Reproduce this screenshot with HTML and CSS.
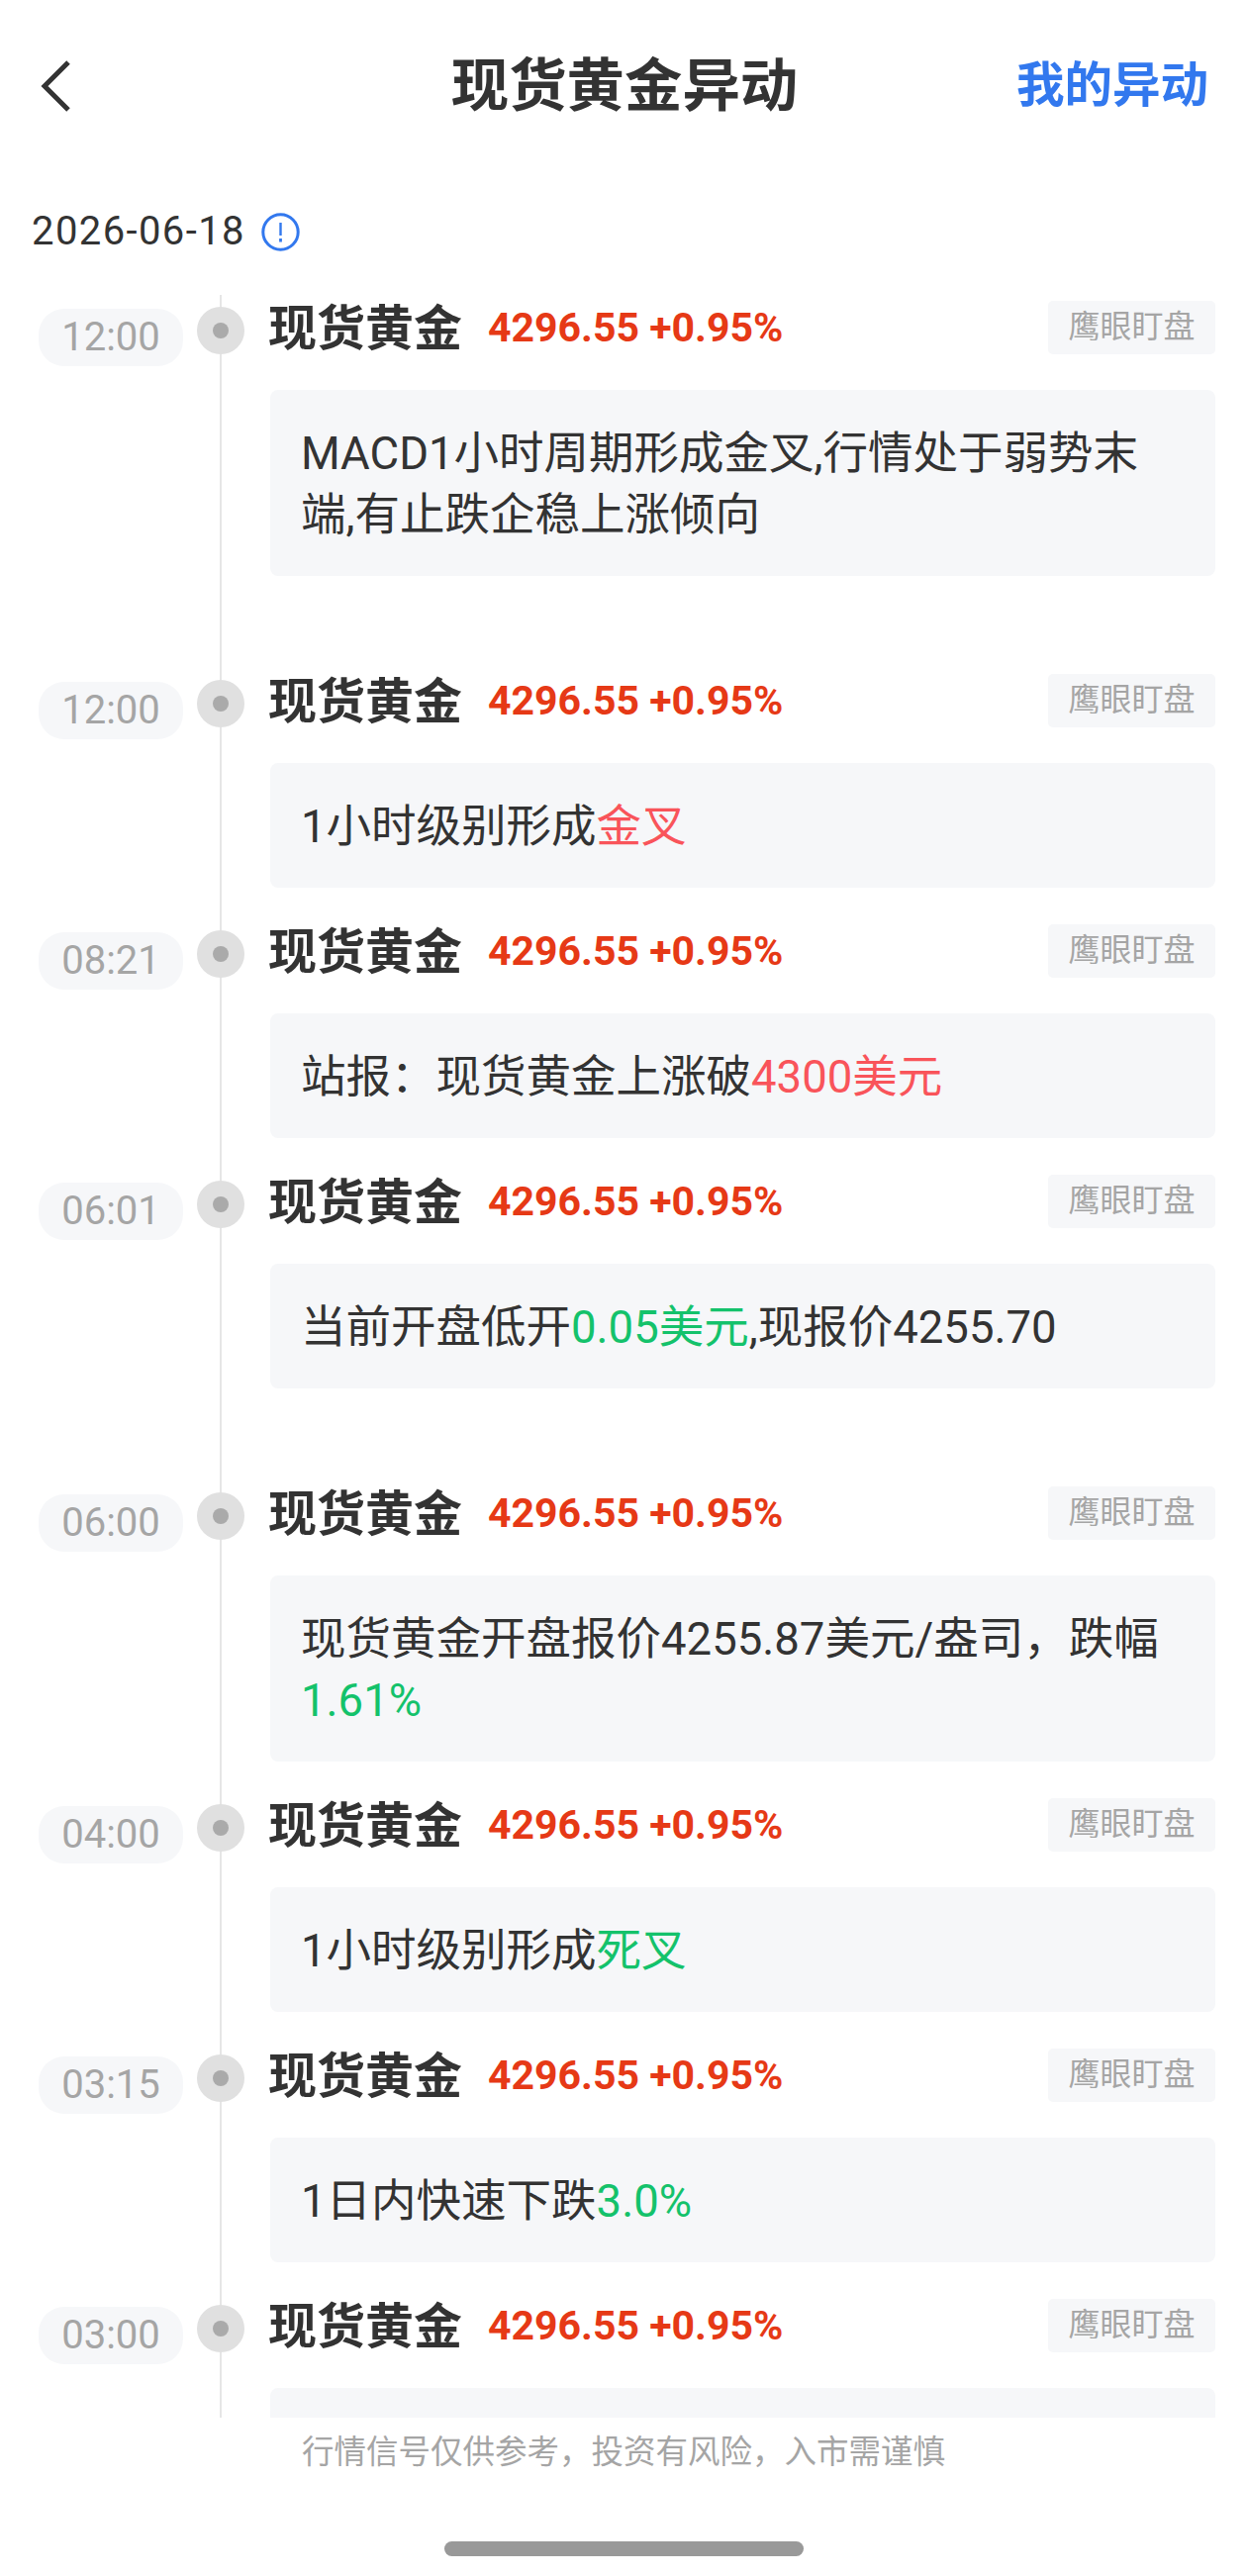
FILE: index.html
```html
<!DOCTYPE html>
<html lang="zh-CN">
<head>
<meta charset="utf-8">
<title>现货黄金异动</title>
<link rel="stylesheet" href="styles.css">
</head>
<body>
<div class="page">
  <header class="nav">
    <svg class="back" width="30" height="52" viewBox="0 0 30 52"><path d="M28 2 L4 26 L28 50" fill="none" stroke="#333" stroke-width="5"/></svg>
    <h1 class="title">现货黄金异动</h1>
    <a class="mine">我的异动</a>
  </header>
  <div class="date-row">
    <span class="date">2026-06-18</span>
    <svg class="info" width="39" height="39" viewBox="0 0 39 39"><circle cx="19.5" cy="19.5" r="17.7" fill="none" stroke="#3278ee" stroke-width="3"/><path d="M19.5 10 V23" stroke="#3278ee" stroke-width="2.4"/><path d="M19.5 26 V29.5" stroke="#3278ee" stroke-width="2.8"/></svg>
  </div>
  <main class="timeline">
    <section class="row extra">
      <div class="time"><span>12:00</span></div>
      <div class="rail"><i class="dot"></i></div>
      <div class="main">
        <div class="head"><b class="name">现货黄金</b><span class="price">4296.55 +0.95%</span><span class="tag">鹰眼盯盘</span></div>
        <p class="body">MACD1小时周期形成金叉,行情处于弱势末端,有止跌企稳上涨倾向</p>
      </div>
    </section>
    <section class="row">
      <div class="time"><span>12:00</span></div>
      <div class="rail"><i class="dot"></i></div>
      <div class="main">
        <div class="head"><b class="name">现货黄金</b><span class="price">4296.55 +0.95%</span><span class="tag">鹰眼盯盘</span></div>
        <p class="body">1小时级别形成<span class="up">金叉</span></p>
      </div>
    </section>
    <section class="row">
      <div class="time"><span>08:21</span></div>
      <div class="rail"><i class="dot"></i></div>
      <div class="main">
        <div class="head"><b class="name">现货黄金</b><span class="price">4296.55 +0.95%</span><span class="tag">鹰眼盯盘</span></div>
        <p class="body">站报：现货黄金上涨破<span class="up">4300美元</span></p>
      </div>
    </section>
    <section class="row extra">
      <div class="time"><span>06:01</span></div>
      <div class="rail"><i class="dot"></i></div>
      <div class="main">
        <div class="head"><b class="name">现货黄金</b><span class="price">4296.55 +0.95%</span><span class="tag">鹰眼盯盘</span></div>
        <p class="body">当前开盘低开<span class="down">0.05美元</span>,现报价4255.70</p>
      </div>
    </section>
    <section class="row">
      <div class="time"><span>06:00</span></div>
      <div class="rail"><i class="dot"></i></div>
      <div class="main">
        <div class="head"><b class="name">现货黄金</b><span class="price">4296.55 +0.95%</span><span class="tag">鹰眼盯盘</span></div>
        <p class="body">现货黄金开盘报价4255.87美元/盎司，跌幅<span class="down">1.61%</span></p>
      </div>
    </section>
    <section class="row">
      <div class="time"><span>04:00</span></div>
      <div class="rail"><i class="dot"></i></div>
      <div class="main">
        <div class="head"><b class="name">现货黄金</b><span class="price">4296.55 +0.95%</span><span class="tag">鹰眼盯盘</span></div>
        <p class="body">1小时级别形成<span class="down">死叉</span></p>
      </div>
    </section>
    <section class="row">
      <div class="time"><span>03:15</span></div>
      <div class="rail"><i class="dot"></i></div>
      <div class="main">
        <div class="head"><b class="name">现货黄金</b><span class="price">4296.55 +0.95%</span><span class="tag">鹰眼盯盘</span></div>
        <p class="body">1日内快速下跌<span class="down">3.0%</span></p>
      </div>
    </section>
    <section class="row">
      <div class="time"><span>03:00</span></div>
      <div class="rail"><i class="dot"></i></div>
      <div class="main">
        <div class="head"><b class="name">现货黄金</b><span class="price">4296.55 +0.95%</span><span class="tag">鹰眼盯盘</span></div>
        <p class="body">&nbsp;</p>
      </div>
    </section>
  </main>
  <footer class="foot">
    <p class="note">行情信号仅供参考，投资有风险，入市需谨慎</p>
    <div class="home"></div>
  </footer>
</div>
</body>
</html>
```
FILE: styles.css
```css
* { box-sizing: border-box; }
html, body { margin: 0; padding: 0; background: #fff; }
body { font-family: Roboto, "Noto Sans CJK SC", sans-serif; color: #333; }
.page { width: 1260px; height: 2603px; overflow: hidden; display: flex; flex-direction: column; }

.nav { height: 174px; flex: none; display: grid; grid-template-columns: 1fr auto 1fr; align-items: center; padding: 0 39px 0 41px; }
.back { display: block; }
.title { margin: 0; font-size: 58.4px; font-weight: 700; line-height: 80px; }
.mine { justify-self: end; font-size: 48.5px; font-weight: 700; line-height: 64px; color: #3278ee; }

.date-row { height: 124px; flex: none; display: flex; align-items: flex-start; gap: 16px; padding: 41px 0 0 32px; }
.date { font-size: 40px; line-height: 38px; letter-spacing: 1.4px; color: #333; }

.timeline { height: 2145px; flex: none; overflow: hidden; padding: 0 32px 0 39px; }
.row { display: grid; grid-template-columns: 146px 48px 1fr; column-gap: 14px; }
.row.extra { padding-bottom: 62px; }

.time { padding-top: 14px; }
.time span { display: block; height: 58px; border-radius: 26px; background: #f6f7f9; color: #a5a5a5; font-size: 40px; line-height: 58px; text-align: center; }

.rail { background: linear-gradient(#e6e6e6, #e6e6e6) center / 2px 100% no-repeat; }
.row.extra .rail { margin-bottom: -62px; }
.dot { display: flex; margin-top: 12px; width: 48px; height: 48px; border-radius: 50%; background: #e0e0e0; align-items: center; justify-content: center; }
.dot::after { content: ""; width: 16px; height: 16px; border-radius: 50%; background: #aaa; }

.main { margin-left: 12px; padding: 6px 0 31px; }
.head { display: flex; align-items: center; height: 54px; }
.name { margin: 3px 0 0 -2px; font-size: 49px; font-weight: 700; line-height: 54px; color: #333; }
.price { margin-left: 26px; font-size: 41px; font-weight: 700; line-height: 54px; color: #e63916; }
.tag { margin-left: auto; width: 169px; height: 54px; border-radius: 5px; background: #f6f7f9; color: #a5a5a5; font-size: 32px; line-height: 52px; text-align: center; }
.body { margin: 36px 0 0; padding: 34px 40px 30px 31px; border-radius: 8px; background: #f6f7f9; font-size: 45.5px; line-height: 62px; color: #333; }
.up { color: #f9545a; }
.down { color: #14c26b; }

.foot { flex: 1; padding: 13px 0 0 305px; position: relative; }
.note { margin: 0; font-size: 32.5px; line-height: 44px; color: #a5a5a5; }
.home { position: absolute; left: 449px; top: 125px; width: 363px; height: 15px; border-radius: 8px; background: #999; }
```
